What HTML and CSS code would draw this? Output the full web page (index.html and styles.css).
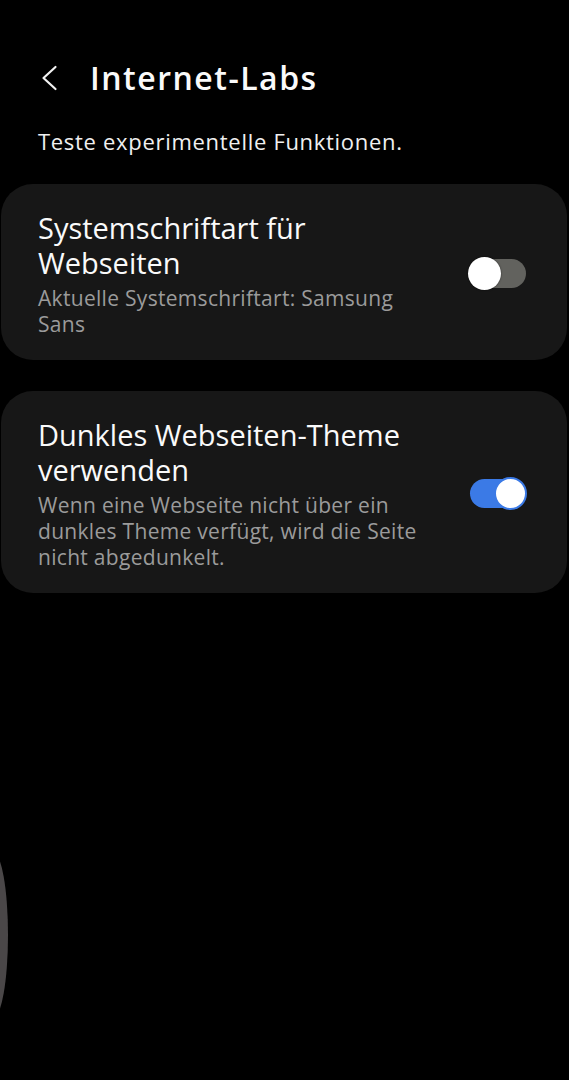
FILE: index.html
```html
<!DOCTYPE html>
<html lang="de">
<head>
    <meta charset="UTF-8">
    <meta name="viewport" content="width=device-width, initial-scale=1.0">
    <title>Internet-Labs</title>
    <link rel="stylesheet" href="styles.css">
</head>
<body>

    <div class="header">
        <svg class="back" width="18" height="26" viewBox="0 0 18 26">
            <path d="M15.5 2 L3.5 13 L15.5 24" fill="none" stroke="#f2f2f2" stroke-width="2.2" stroke-linecap="round" stroke-linejoin="round"/>
        </svg>
        <h1>Internet-Labs</h1>
    </div>

    <p class="intro">Teste experimentelle Funktionen.</p>

    <div class="card">
        <div class="card-text">
            <div class="card-title">Systemschriftart für Webseiten</div>
            <div class="card-desc">Aktuelle Systemschriftart: Samsung Sans</div>
        </div>
        <div class="switch"><span class="thumb"></span></div>
    </div>

    <div class="card">
        <div class="card-text">
            <div class="card-title">Dunkles Webseiten-Theme verwenden</div>
            <div class="card-desc">Wenn eine Webseite nicht über ein dunkles Theme verfügt, wird die Seite nicht abgedunkelt.</div>
        </div>
        <div class="switch on"><span class="thumb"></span></div>
    </div>

    <div class="edge-handle"></div>

</body>
</html>
```

FILE: styles.css
```css
body {
    font-family: "Open Sans", Arial, sans-serif;
    background-color: #000000;
    color: #f4f4f4;
    margin: 0;
    width: 569px;
    height: 1080px;
    position: relative;
    overflow: hidden;
}
.header {
    display: flex;
    align-items: center;
    padding: 56px 0 0 40px;
    height: 44px;
}
.header .back {
    display: block;
}
.header h1 {
    margin: 0 0 0 32px;
    font-size: 32px;
    line-height: 44px;
    font-weight: 600;
    letter-spacing: 1.5px;
    color: #fafafa;
}
.intro {
    margin: 26px 0 28px 38px;
    font-size: 22px;
    line-height: 30px;
    letter-spacing: 0.7px;
    color: #f0f0f0;
}
.card {
    display: flex;
    align-items: center;
    background-color: #171717;
    border-radius: 32px;
    margin: 0 2px 31px 1px;
    padding: 26px 41px 23px 37px;
}
.card-text {
    flex: 1;
    max-width: 395px;
    margin-right: auto;
}
.card-title {
    font-size: 29px;
    line-height: 35px;
    color: #fafafa;
}
.card-desc {
    margin-top: 5px;
    font-size: 21px;
    line-height: 26px;
    letter-spacing: 0.3px;
    color: #9b9b9b;
}
.switch {
    position: relative;
    width: 56px;
    height: 29px;
    border-radius: 15px;
    background-color: #62625e;
    flex-shrink: 0;
}
.switch .thumb {
    position: absolute;
    top: -2px;
    left: -2px;
    width: 33px;
    height: 33px;
    border-radius: 50%;
    background-color: #ffffff;
    box-shadow: 0 0 2px rgba(0, 0, 0, 0.6);
    box-sizing: border-box;
}
.switch.on {
    background-color: #3b7ae6;
}
.switch.on .thumb {
    left: auto;
    right: -1px;
    border: 2px solid #3b7ae6;
    box-shadow: none;
}
.edge-handle {
    position: absolute;
    left: -22px;
    top: 852px;
    width: 30px;
    height: 166px;
    border-radius: 50%;
    background-color: #4a4748;
}
```
